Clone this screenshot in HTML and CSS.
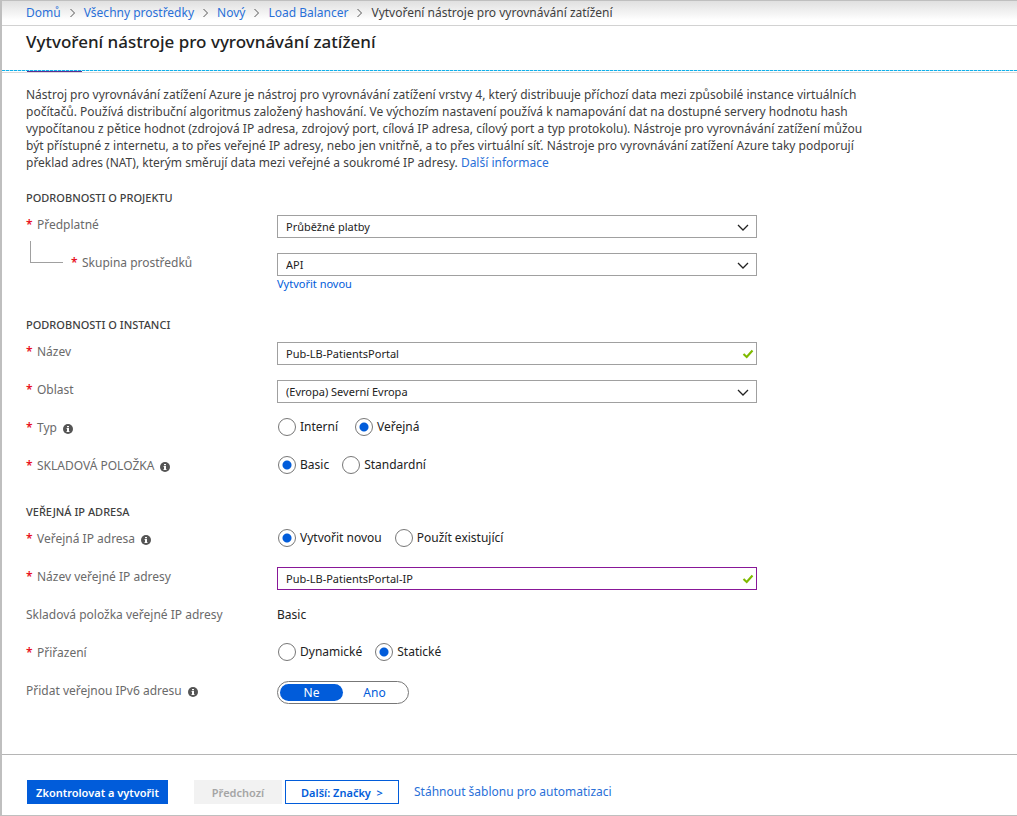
FILE: index.html
```
<!DOCTYPE html>
<html lang="cs">
<head>
<meta charset="utf-8">
<title>Vytvoření nástroje pro vyrovnávání zatížení</title>
<link rel="stylesheet" href="styles.css">
</head>
<body>
<svg class="symbols" aria-hidden="true">
  <symbol id="chevron-right" viewBox="0 0 6 10"><path d="M1 1l4 4-4 4" fill="none" stroke="#555" stroke-width="1"/></symbol>
  <symbol id="chevron-down" viewBox="0 0 12 8"><path d="M1 1l5 5 5-5" fill="none" stroke="#222" stroke-width="1.3"/></symbol>
  <symbol id="check" viewBox="0 0 12 10"><path d="M1.5 5l3.2 3L10.5 1.5" fill="none" stroke="#7fba00" stroke-width="2.1"/></symbol>
  <symbol id="info" viewBox="0 0 10 10"><circle cx="5" cy="5" r="5" fill="#555"/><path d="M4 2h2v1.3H4zM3.5 4H6v3.2h.6V8H3.4v-.8H4V4.8h-.5z" fill="#fff"/></symbol>
</svg>
<div class="page">
  <nav class="crumbs" aria-label="Navigace">
    <a href="#">Domů</a>
    <svg class="crumb-sep"><use href="#chevron-right"/></svg>
    <a href="#">Všechny prostředky</a>
    <svg class="crumb-sep"><use href="#chevron-right"/></svg>
    <a href="#">Nový</a>
    <svg class="crumb-sep"><use href="#chevron-right"/></svg>
    <a href="#">Load Balancer</a>
    <svg class="crumb-sep"><use href="#chevron-right"/></svg>
    <span>Vytvoření nástroje pro vyrovnávání zatížení</span>
  </nav>
  <header class="title-bar">
    <h1>Vytvoření nástroje pro vyrovnávání zatížení</h1>
    <div class="tab-mark"></div>
  </header>
  <main class="content">
    <p class="intro">Nástroj pro vyrovnávání zatížení Azure je nástroj pro vyrovnávání zatížení vrstvy 4, který distribuuje příchozí data mezi způsobilé instance virtuálních<br>
    počítačů. Používá distribuční algoritmus založený hashování. Ve výchozím nastavení používá k namapování dat na dostupné servery hodnotu hash<br>
    vypočítanou z pětice hodnot (zdrojová IP adresa, zdrojový port, cílová IP adresa, cílový port a typ protokolu). Nástroje pro vyrovnávání zatížení můžou<br>
    být přístupné z internetu, a to přes veřejné IP adresy, nebo jen vnitřně, a to přes virtuální síť. Nástroje pro vyrovnávání zatížení Azure taky podporují<br>
    překlad adres (NAT), kterým směrují data mezi veřejné a soukromé IP adresy. <a href="#">Další informace</a></p>

    <section class="group">
      <h2>PODROBNOSTI O PROJEKTU</h2>
      <div class="row">
        <label class="label" for="subscription"><span class="req">*</span>Předplatné</label>
        <div class="field">
          <select id="subscription"><option>Průběžné platby</option></select>
          <svg class="arrow"><use href="#chevron-down"/></svg>
        </div>
      </div>
      <div class="row">
        <div class="nested">
          <span class="elbow"></span>
          <label class="label" for="rg"><span class="req">*</span>Skupina prostředků</label>
        </div>
        <div>
          <div class="field">
            <select id="rg"><option>API</option></select>
            <svg class="arrow"><use href="#chevron-down"/></svg>
          </div>
          <a class="create" href="#">Vytvořit novou</a>
        </div>
      </div>
    </section>

    <section class="group">
      <h2>PODROBNOSTI O INSTANCI</h2>
      <div class="row">
        <label class="label" for="name"><span class="req">*</span>Název</label>
        <div class="field">
          <input type="text" id="name" value="Pub-LB-PatientsPortal">
          <svg class="tick"><use href="#check"/></svg>
        </div>
      </div>
      <div class="row">
        <label class="label" for="region"><span class="req">*</span>Oblast</label>
        <div class="field">
          <select id="region"><option>(Evropa) Severní Evropa</option></select>
          <svg class="arrow"><use href="#chevron-down"/></svg>
        </div>
      </div>
      <div class="row">
        <span class="label" id="type-label"><span class="req">*</span>Typ<svg class="info"><use href="#info"/></svg></span>
        <div class="radios wide" role="radiogroup" aria-labelledby="type-label">
          <label><input type="radio" name="type">Interní</label>
          <label><input type="radio" name="type" checked>Veřejná</label>
        </div>
      </div>
      <div class="row">
        <span class="label" id="sku-label"><span class="req">*</span>SKLADOVÁ POLOŽKA<svg class="info"><use href="#info"/></svg></span>
        <div class="radios" role="radiogroup" aria-labelledby="sku-label">
          <label><input type="radio" name="sku" checked>Basic</label>
          <label><input type="radio" name="sku">Standardní</label>
        </div>
      </div>
    </section>

    <section class="group">
      <h2>VEŘEJNÁ IP ADRESA</h2>
      <div class="row">
        <span class="label" id="ip-label"><span class="req">*</span>Veřejná IP adresa<svg class="info"><use href="#info"/></svg></span>
        <div class="radios" role="radiogroup" aria-labelledby="ip-label">
          <label><input type="radio" name="ip" checked>Vytvořit novou</label>
          <label><input type="radio" name="ip">Použít existující</label>
        </div>
      </div>
      <div class="row">
        <label class="label" for="ip-name"><span class="req">*</span>Název veřejné IP adresy</label>
        <div class="field">
          <input class="active" type="text" id="ip-name" value="Pub-LB-PatientsPortal-IP">
          <svg class="tick"><use href="#check"/></svg>
        </div>
      </div>
      <div class="row">
        <span class="label">Skladová položka veřejné IP adresy</span>
        <span class="value">Basic</span>
      </div>
      <div class="row">
        <span class="label" id="assign-label"><span class="req">*</span>Přiřazení</span>
        <div class="radios" role="radiogroup" aria-labelledby="assign-label">
          <label><input type="radio" name="assign">Dynamické</label>
          <label><input type="radio" name="assign" checked>Statické</label>
        </div>
      </div>
      <div class="row">
        <span class="label" id="v6-label">Přidat veřejnou IPv6 adresu<svg class="info"><use href="#info"/></svg></span>
        <div class="toggle" role="group" aria-labelledby="v6-label">
          <button type="button" class="on" aria-pressed="true">Ne</button>
          <button type="button" aria-pressed="false">Ano</button>
        </div>
      </div>
    </section>
  </main>
  <footer class="actions">
    <button type="button" class="btn primary">Zkontrolovat a vytvořit</button>
    <div class="steps">
      <button type="button" class="btn disabled" disabled>Předchozí</button>
      <button type="button" class="btn outline">Další: Značky &nbsp;&gt;</button>
    </div>
    <a href="#">Stáhnout šablonu pro automatizaci</a>
  </footer>
</div>
</body>
</html>
```
FILE: styles.css
```
* {
  box-sizing: border-box;
}

body {
  margin: 0;
  background: #fff;
  color: #3f3f3f;
  font: 12px/18px "Noto Sans", "Open Sans", sans-serif;
}

a {
  color: #2a70d8;
  text-decoration: none;
}

button,
input,
select {
  font-family: inherit;
  margin: 0;
}

.symbols {
  display: none;
}

.page {
  display: flex;
  flex-direction: column;
  min-height: 100vh;
  border: solid #bfbfbf;
  border-width: 1px 0 1px 2px;
}

.crumbs {
  display: flex;
  align-items: center;
  gap: 8px;
  height: 25px;
  padding-left: 24px;
  border-bottom: 1px solid #d2d2d2;
  background: linear-gradient(#e0e0e0, #fff 80%);
  white-space: nowrap;
}

.crumb-sep {
  width: 7px;
  height: 10px;
  flex: none;
}

.title-bar {
  display: flex;
  flex-direction: column;
  justify-content: space-between;
  height: 47px;
  padding-left: 24px;
  border-bottom: 1px solid #d8d8d8;
}

.title-bar h1 {
  margin: 4px 0 0;
  color: #222;
  font-size: 17px;
  line-height: 24px;
  font-weight: 500;
}

.tab-mark {
  height: 2px;
  margin-left: -24px;
  background:
    repeating-linear-gradient(90deg, #10b0ea 0 3px, #b5e4f6 3px 4px) 0 0 / 100% 1px no-repeat,
    linear-gradient(#5c2d91, #5c2d91) 25px 1px / 55px 1px no-repeat;
}

.content {
  flex: 1;
  padding: 13px 24px 20px;
}

.intro {
  margin: 0 0 19px;
  line-height: 17px;
  white-space: nowrap;
}

.group {
  display: flex;
  flex-direction: column;
  gap: 15px;
  margin-bottom: 25px;
}

.group h2 {
  margin: 0 0 -6px;
  font-size: 11px;
  line-height: 16px;
  font-weight: 500;
}

.row {
  display: grid;
  grid-template-columns: 251px minmax(0, 480px);
  align-items: start;
  min-height: 23px;
}

.label {
  display: flex;
  align-items: center;
  padding-top: 1px;
  color: #6a6a6a;
}

.req {
  width: 11px;
  color: #e81123;
  font-weight: 600;
}

.info {
  width: 10px;
  height: 10px;
  margin: 2px 0 0 6px;
}

.nested {
  display: flex;
  gap: 8px;
  padding-left: 4px;
}

.elbow {
  width: 33px;
  height: 22px;
  margin-top: -12px;
  border: solid #a0a0a0;
  border-width: 0 0 1px 1px;
}

.field {
  position: relative;
}

.field select,
.field input {
  display: block;
  width: 100%;
  height: 23px;
  padding: 0 30px 0 8px;
  border: 1px solid #a0a0a0;
  border-radius: 0;
  outline: none;
  background: #fff;
  color: #222;
  font-size: 11px;
  appearance: none;
}

.field .active {
  border-color: #881798;
}

.arrow,
.tick {
  position: absolute;
  width: 12px;
  pointer-events: none;
}

.arrow {
  top: 9px;
  right: 8px;
  height: 8px;
}

.tick {
  top: 7px;
  right: 3px;
  height: 10px;
}

.create {
  display: block;
  color: #015cda;
  font-size: 11px;
  line-height: 16px;
}

.radios {
  display: flex;
  gap: 12px;
  color: #222;
}

.radios.wide {
  gap: 16px;
}

.radios label {
  display: flex;
  align-items: center;
  gap: 4px;
}

.radios input {
  width: 18px;
  height: 18px;
  margin-left: 1px;
  border: 1px solid #777;
  border-radius: 50%;
  background: #fff;
  appearance: none;
}

.radios input:checked {
  background: radial-gradient(circle, #015cda 4px, #fff 5px);
}

.value {
  padding-top: 1px;
  color: #222;
}

.toggle {
  display: flex;
  width: 132px;
  height: 23px;
  padding: 2px;
  border: 1px solid #777;
  border-radius: 12px;
}

.toggle button {
  flex: 1;
  padding: 0;
  border: 0;
  border-radius: 9px;
  background: none;
  color: #015cda;
  font-size: 12px;
  line-height: 17px;
}

.toggle .on {
  background: #015cda;
  color: #fff;
}

.actions {
  display: flex;
  align-items: center;
  padding: 25px 24px 11px 25px;
  border-top: 1px solid #b5b5b5;
}

.btn {
  height: 24px;
  padding: 0;
  border: 0;
  font-size: 11px;
  font-weight: 600;
}

.primary {
  width: 141px;
  margin-right: 26px;
  background: #015cda;
  color: #fff;
}

.steps {
  display: flex;
  gap: 3px;
  margin-right: 15px;
}

.disabled {
  width: 88px;
  background: #f2f2f2;
  color: #a5a5a5;
}

.outline {
  width: 114px;
  border: 1px solid #015cda;
  background: #fff;
  color: #015cda;
}
```
